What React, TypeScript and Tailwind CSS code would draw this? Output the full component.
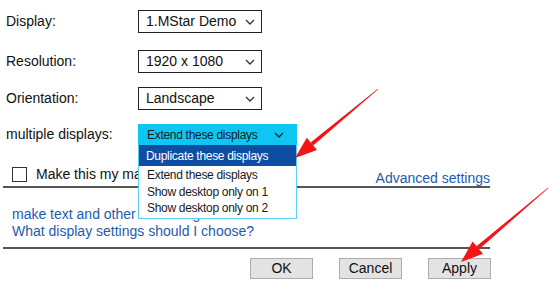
import React from 'react';

function Chevron({ className = '' }: { className?: string }) {
    return (
        <svg width="10" height="6" viewBox="0 0 10 6" className={className}>
            <polyline points="1,1 5,5 9,1" fill="none" stroke="currentColor" strokeWidth="1.3" />
        </svg>
    );
}

function SelectRow({ label, value, gap }: { label: string; value: string; gap: string }) {
    return (
        <div className={`flex items-center h-[23px] ${gap}`}>
            <span className="w-[132px]">{label}</span>
            <div className="w-[124px] h-[23px] border-[1.5px] border-[#222] flex items-center justify-between pl-[7px] pr-[6px]">
                <span>{value}</span>
                <Chevron className="text-[#333]" />
            </div>
        </div>
    );
}

const options = ['Extend these displays', 'Show desktop only on 1', 'Show desktop only on 2'];

export default function App() {
    return (
        <div className="relative w-[550px] h-[290px] bg-white overflow-hidden font-['Liberation_Sans',Arial,sans-serif] text-[14px] text-[#111]">
            {/* Select rows */}
            <div className="pl-[6px] pt-[10px]">
                <SelectRow label="Display:" value="1.MStar Demo" gap="" />
                <SelectRow label="Resolution:" value="1920 x 1080" gap="mt-[17px]" />
                <SelectRow label="Orientation:" value="Landscape" gap="mt-[14px]" />

                {/* Multiple displays, open */}
                <div className="flex items-center h-[21px] mt-[14px]">
                    <span className="w-[132px]">multiple displays:</span>
                    <div className="relative z-10 w-[159px]">
                        <div className="h-[21px] bg-[#0fc6f3] flex items-center justify-between pl-[9px] pr-[13px] text-[12px] tracking-[-0.3px] text-[#1a1a1a]">
                            <span>Extend these displays</span>
                            <Chevron className="text-[#1a2a3a]" />
                        </div>
                        <div className="absolute left-0 top-[21px] w-[159px] bg-white border border-t-0 border-[#5ccdf0] text-[12px] tracking-[-0.3px]">
                            <div className="h-[21px] bg-[#0d4ea3] text-white flex items-center pl-[7px]">
                                Duplicate these displays
                            </div>
                            <div className="py-[1px]">
                                {options.map((o) => (
                                    <div key={o} className="h-[16.5px] leading-[16.5px] pl-[8px] text-[#1a1a1a]">
                                        {o}
                                    </div>
                                ))}
                            </div>
                        </div>
                    </div>
                </div>
            </div>

            {/* Checkbox + advanced settings */}
            <div className="ml-[3px] mt-[22px] w-[487px] flex justify-between items-end border-b-2 border-[#555]">
                <div className="flex items-center ml-[9px] mb-[4px] h-[15px]">
                    <div className="w-[15px] h-[15px] border-[1.5px] border-[#333] bg-white" />
                    <span className="ml-[9px] whitespace-nowrap">Make this my main display</span>
                </div>
                <span className="leading-[16px] text-[#1e5bb0]">Advanced settings</span>
            </div>

            {/* Links */}
            <div className="ml-[3px] w-[487px] pl-[9px] pt-[18px] pb-[7px] border-b-2 border-[#555] text-[#1e5bb0] leading-[17px]">
                <div className="whitespace-nowrap">make text and other items larger or smaller</div>
                <div>What display settings should I choose?</div>
            </div>

            {/* Buttons */}
            <div className="flex pl-[250px] gap-[26px] mt-[9px]">
                {['OK', 'Cancel', 'Apply'].map((b) => (
                    <button
                        key={b}
                        className="w-[63px] h-[21px] bg-[#e3e3e3] border border-[#adadad] flex items-center justify-center text-[#111]"
                    >
                        {b}
                    </button>
                ))}
            </div>

            {/* Red annotation arrows */}
            <svg className="absolute inset-0 pointer-events-none z-20" width="550" height="290" viewBox="0 0 550 290">
                <g fill="#f51414">
                    <polygon points="378.2,89.2 313.2,145.4 310.6,142.4 377.8,88.8" />
                    <polygon points="295,158 317,150 306.8,137.8" />
                    <polygon points="548.2,188.2 479.1,249.2 476.5,246.2 547.8,187.8" />
                    <polygon points="461,262 483,253.8 472.6,241.6" />
                </g>
            </svg>
        </div>
    );
}
